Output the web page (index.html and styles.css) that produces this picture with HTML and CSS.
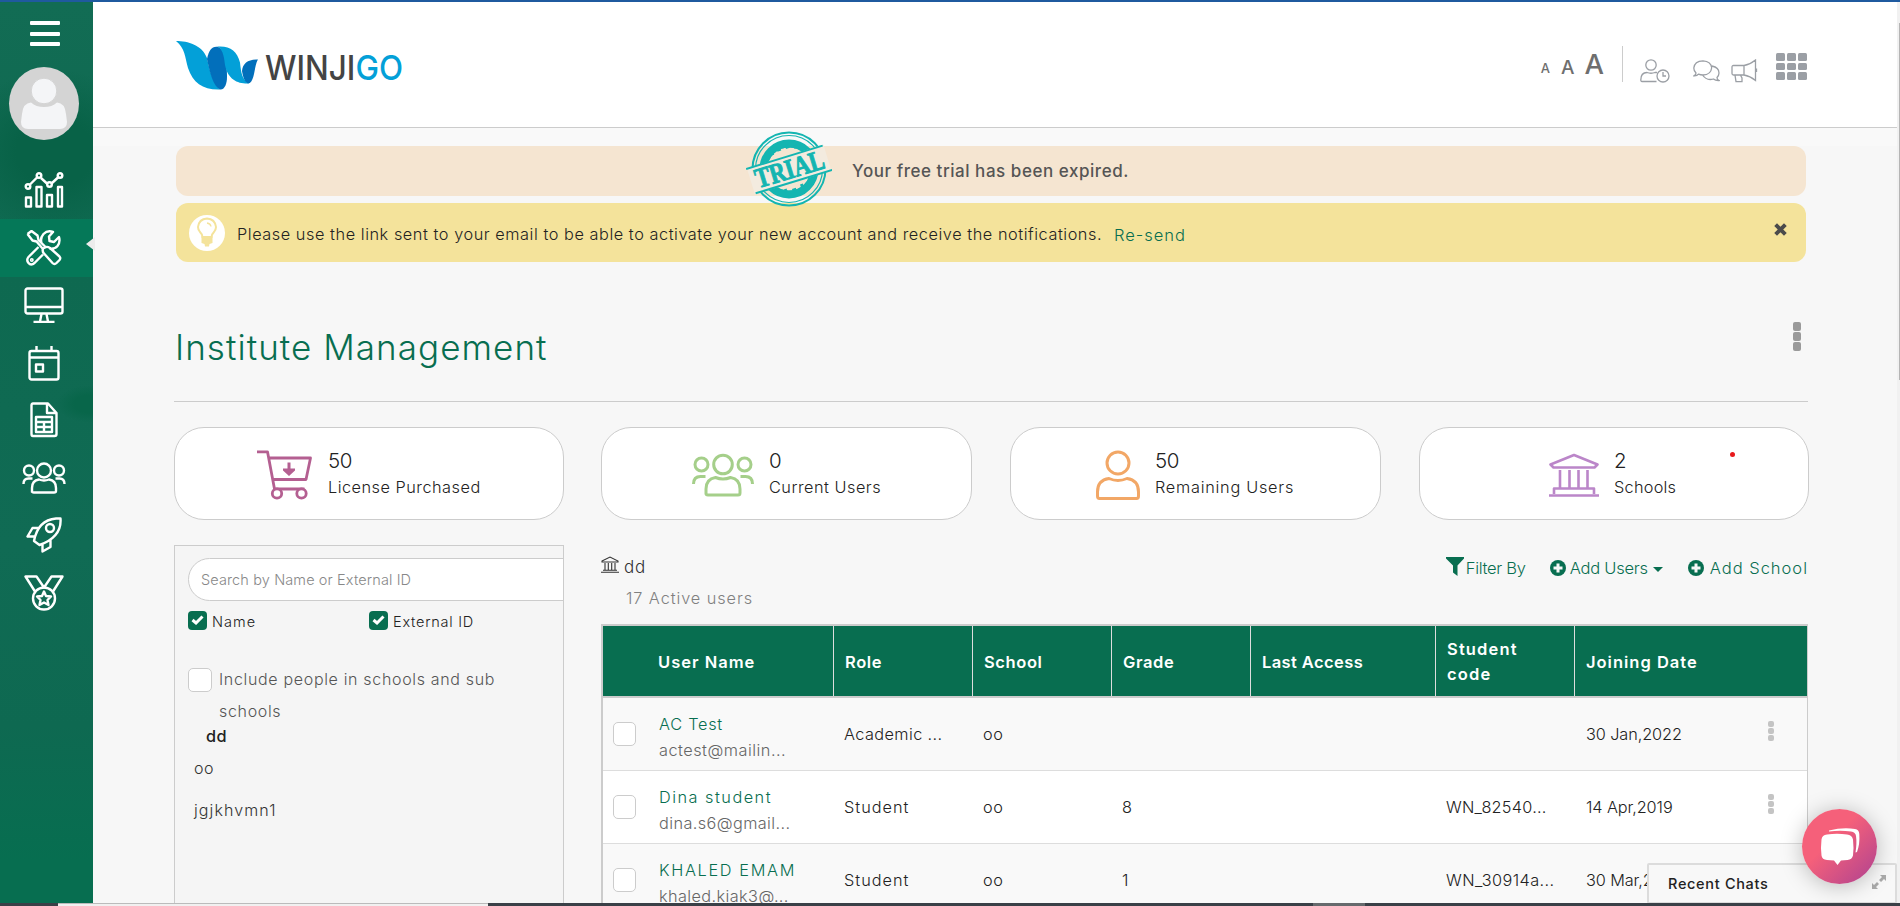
FILE: index.html
```html
<!DOCTYPE html>
<html lang="en">
<head>
<meta charset="utf-8">
<title>Winjigo - Institute Management</title>
<link rel="stylesheet" href="styles.css">
</head>
<body>
<div class="window">
  <nav class="sidebar">
    <div class="burger"><i></i><i></i><i></i></div>
    <div class="avatar">
      <svg width="70" height="73" viewBox="0 0 70 73"><circle cx="35" cy="24" r="12.8"/><path d="M22 35.500Q27 40 35 40T48 35.500Q56 36 57 47L58 55Q58 62 51 62H19Q12 62 12 55L13 47Q14 36 22 35.500Z"/></svg>
    </div>
    <ul class="nav">
      <li><svg width="40" height="36" viewBox="0 0 40 36"><path d="M2 25.500h5v9H2zM12.500 15h5v19.500h-5zM23 23h5v11.500h-5zM34 15h4v19.500h-4zM6 12.500l7.500-7.500M17 6l6.500 6M27.500 11.500l7-6.500"/><circle cx="4" cy="14.500" r="2.300"/><circle cx="15" cy="3.500" r="2.300"/><circle cx="25.500" cy="12.500" r="2.300"/><circle cx="36" cy="3.500" r="2.300"/></svg></li>
      <li class="active"><svg width="36" height="36" viewBox="0 0 36 36"><path d="M1.500 4l4-3 6 4.500 1 4.500 7 7M1.500 4l5 6.500 4 1 6.500 7.500M17 18.500q-1 3 1 5l8.500 9.500q2 2 4 0l3-3q1.500-2 0-3.500L24 18q-3-2-5-.5zM12.500 17L2.500 27q-2.500 3 0 6t6 0l8.500-8.500M15.500 13q-1.500-5 2-9 4-4 9.500-2l-4 4.500.5 4.500 4.500 1L33 7q1.500 5-1.500 9-3 3.500-8 2.500"/><circle cx="5.800" cy="30" r=".8"/></svg></li>
      <li><svg width="40" height="36" viewBox="0 0 40 36"><rect x="1.500" y="1.500" width="37" height="25" rx="2"/><path d="M2 20h36M17.500 27L16 34.500M22.500 27l1.500 7.500M9.500 35h21"/></svg></li>
      <li><svg width="32" height="36" viewBox="0 0 32 36"><rect x="1.500" y="6" width="29" height="28.500" rx="2"/><path d="M2 12.500h28M8.500 1v5M23.500 1v5M8 19.500h7v7H8z"/></svg></li>
      <li><svg width="28" height="36" viewBox="0 0 28 36"><path d="M3 1.500h15l8.500 9.500v21q0 2-2 2H3q-1.500 0-1.500-2V3.500q0-2 1.500-2zM17 2v9h9M6 15h16v15H6zM6 20h16M6 25h16M14 20v10"/></svg></li>
      <li><svg width="44" height="32" viewBox="0 0 44 32"><circle cx="22" cy="8.500" r="7"/><circle cx="7" cy="8.500" r="5"/><circle cx="37" cy="8.500" r="5"/><path d="M10 30.500V26q0-7.500 7-8.500 5 2 10 0 7 1 7 8.500v3q0 1.500-2 1.500H12q-2 0-2-1.500M1.500 22q0-5.500 5-5.500h4M42.500 22q0-5.500-5-5.500h-4"/></svg></li>
      <li><svg width="36" height="36" viewBox="0 0 36 36"><path d="M8 24Q12 3 30 1.500h4.500Q36 20 13.500 28zM13 11H6.500L1.500 19.500h7M16.500 27.500V34.500l8-4.500V22.500"/><circle cx="24" cy="11" r="4"/></svg></li>
      <li><svg width="40" height="36" viewBox="0 0 40 36"><circle cx="20" cy="23.500" r="11"/><path d="M11 16.500L1.500 1.500h11l7.500 11 7.500-11h11L29 16.500"/><path d="M20 16.500l2 4.500 5 .5-3.500 3.500 1 5-4.500-2.500-4.500 2.500 1-5L13 21.500l5-.5z"/></svg></li>
    </ul>
  </nav>

  <div class="page">
    <header class="topbar">
      <svg class="logo" width="230" height="54" viewBox="0 0 230 54">
        <path fill="#03a0d8" d="M0 1C12 1 26 5 31 18 34 33 38 44 44 49.500 27 50 17 43 12 28 9 17 9 8 0 1Z"/>
        <path fill="#026fbb" d="M31 19C33 10 36 6 42 7c7 2 9 17 9 30 0 6-2 13-7 12.500C37 46 34 33 31 19Z"/>
        <path fill="#03a0d8" d="M41 6.500c13-1 20 4 23 16C65 32 66 40 73 43.500 62 44 52 40 49 25 48 15 46 8 41 6.500Z"/>
        <path fill="#026fbb" d="M66 31C67 23 72 19.500 82 19.500 78 25 79 43 72 43.500c-4-2-5-7-6-12.500Z"/>
        <text x="89" y="40" textLength="138" lengthAdjust="spacingAndGlyphs" fill="#444">WINJI<tspan fill="#03a0d8">GO</tspan></text>
      </svg>
      <div class="tools">
        <span class="fs fs1">A</span><span class="fs fs2">A</span><span class="fs fs3">A</span>
        <span class="sep"></span>
        <svg class="i1" width="30" height="24" viewBox="0 0 30 24"><circle cx="11" cy="6" r="5.200"/><path d="M16.500 22.500H2q-1.200 0-1.200-1.500 0-7.500 6.200-7.500 4 1.500 8 0h2"/><circle cx="23" cy="17" r="6"/><path d="M23 13v4h3"/></svg>
        <svg class="i2" width="27" height="22" viewBox="0 0 27 22"><path d="M3 13Q.8 11 .8 8 1.500 1 10 .8q8 .5 8.700 7-.8 7-8.700 7.200-2.500 0-4.500-.8Q4 16 1 15.800 3 14.500 3 13zM19 6q7 1.500 7 7 0 2.500-2 4.500 0 2 2 3-3.500.2-5.500-1.500-7 2-11-4"/></svg>
        <svg class="i3" width="27" height="24" viewBox="0 0 27 24"><path d="M13 6.500H2.500Q1 6.500 1 8v6.500Q1 16 2.500 16H13zM13 6.500q6-1 11.500-5.500v20.500Q19 17 13 16M4 16.200l1 6.500h6V19l-1.500-2.800M25.500 9.500v3.500"/></svg>
        <div class="apps"><i></i><i></i><i></i><i></i><i></i><i></i><i></i><i></i><i></i></div>
      </div>
    </header>

    <main class="content">
      <div class="alert trial">
        <span class="stamp"><svg width="86" height="77" viewBox="0 0 86 77">
          <g fill="none" stroke="#14b5b1"><circle cx="43" cy="38" r="36.500" stroke-width="2"/><circle cx="43" cy="38" r="33.500" stroke-width="1.200"/><circle cx="43" cy="38" r="25.500" stroke-width="8"/><circle cx="43" cy="38" r="22" stroke-width=".8"/></g>
          <g transform="rotate(-17 43 38)"><path fill="#f3ebdf" d="M3 25h80v27H3z"/><path stroke="#14b5b1" stroke-width="2" d="M2 25.500h80M4 51.500h80"/><text x="8" y="47.500" textLength="71" lengthAdjust="spacingAndGlyphs">TRIAL</text>
          <path fill="#14b5b1" d="M30 17h3v3h-3zM37 14h4v4h-4zM46 14h4v4h-4zM54 17h3v3h-3zM32 56h3v3h-3zM40 58h4v4h-4zM49 56h3v3h-3z"/></g>
        </svg></span>
        <span>Your free trial has been expired.</span>
      </div>
      <div class="alert notice">
        <svg width="36" height="36" viewBox="0 0 36 36"><circle cx="18" cy="18" r="18" fill="#fff"/><path d="M13.500 22q0-2.500-2.500-5-2-2.500-2-5 1-8 9-8.500 8 .5 9 8.500 0 2.500-2 5-2.500 2.500-2.500 5z" fill="#fff" stroke="#f4e39b" stroke-width="2"/><path fill="#f4e39b" d="M12.500 21h11v7l-3 1-.5 2.500h-4l-.5-2.500-3-1z"/><path d="M18 8q3.500.5 4 3.500" fill="none" stroke="#f4e39b" stroke-width="1.300"/></svg>
        <span class="notice-text">Please use the link sent to your email to be able to activate your new account and receive the notifications.</span>
        <a class="resend">Re-send</a>
        <svg class="close" width="13" height="13" viewBox="0 0 12 12"><path d="M1.500 1.500l9 9M10.500 1.500l-9 9" stroke="#4b4b4b" stroke-width="3.600"/></svg>
      </div>

      <div class="title-row">
        <h1>Institute Management</h1>
        <span class="dots big"><i></i><i></i><i></i></span>
      </div>

      <div class="stats">
        <div class="card c1">
          <svg width="56" height="50" viewBox="0 0 56 50" stroke="#b45f91"><path stroke-width="2.800" d="M0 1.800h10.500l7 37.200h30M12 8h41.500L49 29.500H16"/><circle cx="20" cy="43.500" r="4.700" fill="#fff" stroke-width="2.800"/><circle cx="44.500" cy="43.500" r="4.700" fill="#fff" stroke-width="2.800"/><path stroke="none" fill="#b45f91" d="M30.500 12.500h3v6H38v2l-6 5.500-6-5.500v-2h4.500z"/></svg>
          <div><b>50</b><span class="ls5">License Purchased</span></div>
        </div>
        <div class="card c2">
          <svg width="62" height="44" viewBox="0 0 62 44" stroke="#a5cf8a" stroke-width="3"><circle cx="31" cy="11.500" r="9.300"/><circle cx="9.500" cy="11.500" r="6.500"/><circle cx="52.500" cy="11.500" r="6.500"/><path d="M14 41.500V36q0-10 9.500-11.500 7.500 3 15 0Q48 26 48 36v4q0 2-2 2H16q-2 0-2-2M1.500 31q0-7.500 7-7.500h5M60.500 31q0-7.500-7-7.500h-5"/></svg>
          <div><b>0</b><span class="ls5">Current Users</span></div>
        </div>
        <div class="card c3">
          <svg width="44" height="50" viewBox="0 0 44 50" stroke="#f2a766" stroke-width="3"><circle cx="22" cy="13" r="11"/><path d="M1.500 46V42Q1.500 30 13 28.500q9 4 18 0Q42.500 30 42.500 42v4q0 2.500-2 2.500h-37q-2 0-2-2.500z"/></svg>
          <div><b>50</b><span class="ls7">Remaining Users</span></div>
        </div>
        <div class="card c4">
          <svg width="50" height="44" viewBox="0 0 50 44" stroke="#bb86c9" stroke-width="2.600"><path d="M1.500 11.500L25 2l23.500 9.500-3 3h-41zM11 17v18M20.500 17v18M29.500 17v18M38.500 17v18M5 41v-5.500h40V41M0 42.500h50"/></svg>
          <div><b>2</b><span class="ls2">Schools</span></div>
          <em class="pin"></em>
        </div>
      </div>

      <div class="columns">
        <aside class="panel">
          <div class="search">Search by Name or External ID</div>
          <div class="checks">
            <label><span class="tick"><svg width="13" height="10" viewBox="0 0 13 10"><path d="M1.500 5l3.500 3 6.500-6.500"/></svg></span><span class="ls10">Name</span></label>
            <label><span class="tick"><svg width="13" height="10" viewBox="0 0 13 10"><path d="M1.500 5l3.500 3 6.500-6.500"/></svg></span><span class="ls8">External ID</span></label>
          </div>
          <label class="include"><span class="box"></span><span>Include people in schools and sub schools</span></label>
          <div class="tree-root">dd</div>
          <div class="tree-item">oo</div>
          <div class="tree-item second">jgjkhvmn1</div>
        </aside>

        <section class="users">
          <div class="users-head">
            <div class="group">
              <div class="group-name"><svg width="18" height="17" viewBox="0 0 18 17"><path d="M1 5l8-4 8 4v1H1zM4 7v7M7.300 7v7M10.700 7v7M14 7v7M2 14.200h14M0 16.300h18"/></svg><span>dd</span></div>
              <div class="count">17 Active users</div>
            </div>
            <div class="actions">
              <a class="filter"><svg width="19" height="19" viewBox="0 0 19 19"><path d="M0 0h18v1.500L11.500 8.500V19L7 15.500v-7L0 1.500z"/></svg><span>Filter By</span></a>
              <a class="addu"><svg width="16" height="16" viewBox="0 0 16 16"><circle cx="8" cy="8" r="8"/><path class="plus" d="M8 3.500v9M3.500 8h9"/></svg><span>Add Users</span><i class="caret"></i></a>
              <a class="adds"><svg width="16" height="16" viewBox="0 0 16 16"><circle cx="8" cy="8" r="8"/><path class="plus" d="M8 3.500v9M3.500 8h9"/></svg><span>Add School</span></a>
            </div>
          </div>
          <div class="table">
            <div class="row head">
              <span class="c-name"><span class="ls10">User Name</span></span><span class="w1">Role</span><span class="w1">School</span><span class="w1">Grade</span><span class="ls4">Last Access</span><span class="ls11">Student<br>code</span><span class="ls10">Joining Date</span>
            </div>
            <div class="row odd">
              <span class="check"><i class="box"></i></span><span class="who"><a class="ls7">AC Test</a><small class="ls5">actest@mailin...</small></span><span class="ls4">Academic ...</span><span class="ls5">oo</span><span></span><span></span><span></span><span class="date">30 Jan,2022</span><span class="dots"><i></i><i></i><i></i></span>
            </div>
            <div class="row">
              <span class="check"><i class="box"></i></span><span class="who"><a class="ls15">Dina student</a><small class="ls4">dina.s6@gmail...</small></span><span class="ls10">Student</span><span class="ls5">oo</span><span>8</span><span></span><span class="ls2">WN_82540...</span><span class="date">14 Apr,2019</span><span class="dots"><i></i><i></i><i></i></span>
            </div>
            <div class="row odd">
              <span class="check"><i class="box"></i></span><span class="who"><a class="ls16">KHALED EMAM</a><small class="ls4">khaled.kiak3@...</small></span><span class="ls10">Student</span><span class="ls5">oo</span><span>1</span><span></span><span class="ls4">WN_30914a...</span><span class="date">30 Mar,2021</span><span class="dots"><i></i><i></i><i></i></span>
            </div>
          </div>
        </section>
      </div>
    </main>
  </div>
  <div class="scrollbar"><i></i></div>

  <div class="recent"><span>Recent Chats</span><svg width="14" height="14" viewBox="0 0 14 14"><path d="M14 0v6l-2-2-3 3-2-2 3-3-2-2zM0 14V8l2 2 3-3 2 2-3 3 2 2z"/></svg></div>
  <div class="chat"><svg width="75" height="75" viewBox="0 0 75 75"><path fill="#fff" d="M25 25.500Q35 24 45 25.500q5 .5 6 5 1 9 0 16-1 4-5.500 4.500L39 51.500 35.500 56 32 51.500l-7-.5q-5-.5-5.500-4.500-1-8 0-16 .5-4.500 5.500-5z"/><path fill="#fff" d="M27 21.500Q41 18 53 20q4 .5 4.300 5 .7 10-2.300 18l-1.500.5Q55 34 54 27q-.5-4-5-4.500-11-1.500-22 0z"/></svg></div>
  <footer class="taskbar"><i class="sheet"></i><i class="tab"></i></footer>
</div>
</body>
</html>
```
FILE: styles.css
```css
* { box-sizing: border-box; }
body { margin: 0; font-family: Inter, "Liberation Sans", sans-serif; font-weight: 300; font-size: 16.3px; color: #222; background: #f7f7f7; }
i, em { font-style: normal; display: block; }
svg { display: block; flex: none; }
a { color: #086e50; }

.window { position: relative; width: 1900px; height: 906px; overflow: hidden; display: flex; border-top: 2px solid #1f5a9f; }

.sidebar { width: 93px; flex: none; padding-top: 19px; display: flex; flex-direction: column; align-items: center;
  background:
    radial-gradient(ellipse 130px 110px at 55px 150px, #086247 30%, transparent 75%),
    radial-gradient(ellipse 40px 22px at 90px 402px, #08664a 40%, transparent 85%),
    linear-gradient(#126c54 0, #0e6950 30%, #106b54 60%, #0e6951 80%, #076e50 95%); }
.burger { width: 30px; height: 25px; display: flex; flex-direction: column; justify-content: space-between; margin-right: 4px; }
.burger i { height: 4px; background: #fff; border-radius: 1px; }
.avatar { width: 70px; height: 73px; border-radius: 50%; background: #d4d4d4; margin: 21px 5px 0 0; overflow: hidden; }
.avatar svg { fill: #f4f5f7; }
.avatar circle { stroke: #d4d4d4; stroke-width: 1; }
.nav { list-style: none; margin: 21.500px 0 0; padding: 0; width: 100%; }
.nav li { height: 57.500px; display: flex; align-items: center; justify-content: center; padding-right: 5px; position: relative; }
.nav svg { fill: none; stroke: #fff; stroke-width: 2.400; stroke-linejoin: round; }
.nav .active { background: #057858; }
.nav .active::after { content: ""; position: absolute; right: -2px; top: 18px; border: 7px solid transparent; border-right: 9px solid #ececec; border-left: 0; }

.page { width: 1804px; flex: none; }
.topbar { height: 126px; background: #fff; border-bottom: 1px solid #ccc; display: flex; justify-content: space-between; align-items: flex-start; padding: 38px 90px 0 83px; }
.logo text { font: 500 34.500px Inter, sans-serif; }
.tools { display: flex; align-items: flex-start; }
.tools svg { fill: none; stroke: #9b9fa5; stroke-width: 1.300; }
.fs { color: #6e6e6e; font-weight: 500; line-height: 1; }
.fs1 { font-size: 13px; margin: 22px 11px 0 0; }
.fs2 { font-size: 19px; margin: 18px 10px 0 0; }
.fs3 { font-size: 27.500px; margin: 11px 18px 0 0; }
.sep { width: 1px; height: 36px; background: #ccc; margin: 6px 17px 0 0; }
.i1 { margin: 19px 23px 0 0; }
.i2 { margin: 20px 11px 0 0; }
.i3 { margin: 19px 18px 0 0; }
.apps { display: grid; grid-template-columns: repeat(3, 9px); grid-auto-rows: 7.700px; gap: 2px; margin-top: 13px; }
.apps i { background: #9b9fa5; border-radius: 1.500px; }

.content { padding: 18px 89px 0 81px; background: linear-gradient(#f9f9f9 18px, #f7f7f7 18px); height: 776px; overflow: hidden; }
.alert { display: flex; align-items: center; margin: 0 2px; border-radius: 12px; }
.trial { position: relative; z-index: 1; height: 50px; background: #f5e5d1; color: #555; font-weight: 500; font-size: 17px; letter-spacing: .54px; padding-left: 570px; }
.stamp { width: 86px; height: 77px; margin: -3px 20px 0 0; }
.stamp text { font: 700 28px "Liberation Serif", serif; fill: #14b5b1; stroke: #14b5b1; letter-spacing: 0; }
.notice { height: 59px; margin-top: 7px; background: #f4e39b; padding: 0 19px 0 13px; }
.notice-text { margin: 2px 0 0 12px; letter-spacing: .555px; white-space: nowrap; }
.resend { font-size: 16.500px; letter-spacing: .95px; margin: 4px 0 0 12px; }
.close { margin: -7px 0 0 auto; }

.title-row { height: 140px; border-bottom: 1px solid #ccc; display: flex; justify-content: space-between; padding: 60px 7px 0 0; }
h1 { margin: 1px 0 0 1px; font-weight: 300; font-size: 35px; line-height: 48px; letter-spacing: 1.050px; color: #086e50; }
.dots { display: flex; flex-direction: column; gap: 1px; }
.dots i { width: 6px; height: 6px; background: #c4c4c4; border-radius: 2px; }
.dots.big i { width: 8px; height: 9px; background: #9a9a9a; }

.stats { display: grid; grid-template-columns: 390px 371px 371px 389px; column-gap: 38px; margin-top: 25px; }
.card { position: relative; height: 93px; border: 1px solid #ccc; border-radius: 30px; background: #fff; display: flex; padding-top: 22px; }
.card svg { fill: none; stroke-linejoin: round; }
.card > div { display: flex; flex-direction: column; margin: -1px 0 0 15px; }
.card b { font-weight: 300; font-size: 20.500px; line-height: 24px; letter-spacing: -.4px; }
.card span { line-height: 24px; margin-top: 2px; }
.c1 { padding-left: 82px; }
.c2 { padding-left: 90px; margin: 0 1px 0 -1px; }
.c3 { padding-left: 85px; margin-left: -1px; margin-right: 1px; }
.c4 { padding-left: 129px; margin-left: -1px; margin-right: 0; }
.c2 svg, .c4 svg { margin-top: 3px; }
.pin { position: absolute; left: 310px; top: 24px; width: 5px; height: 5px; border-radius: 50%; background: #e8191c; }

.columns { display: flex; gap: 37px; margin-top: 25px; }
.panel { width: 390px; height: 380px; flex: none; border: 1px solid #ccc; background: #f5f5f5; padding: 12px 0 0 13px; overflow: hidden; }
.search { width: 420px; height: 43px; border: 1px solid #ccc; border-radius: 22px; background: #fff; color: #888; font-size: 14.500px; letter-spacing: .12px; line-height: 42px; padding-left: 12px; }
.checks { display: flex; margin-top: 10px; font-size: 14.500px; }
.checks label { display: flex; width: 181px; align-items: center; height: 19px; }
.checks label > span:last-child { margin: 2px 0 0 5px; }
.tick { width: 19px; height: 19px; border-radius: 4px; background: #086e50; display: flex; align-items: center; justify-content: center; }
.tick svg { fill: none; stroke: #fff; stroke-width: 3; margin-top: -2px; }
.box { width: 24px; height: 24px; border: 1px solid #ccc; border-radius: 5px; background: #fff; flex: none; }
.include { display: flex; margin-top: 33px; font-size: 16px; line-height: 32px; letter-spacing: .67px; color: #555; }
.include .box { margin-top: 5px; }
.include span:last-child { width: 300px; margin-left: 7px; }
.tree-root { font-weight: 500; font-size: 16.300px; line-height: 20px; margin: -1px 0 0 18px; letter-spacing: .5px; }
.tree-item { margin: 12px 0 0 6px; line-height: 20px; font-size: 16px; letter-spacing: .5px; color: #333; }
.tree-item.second { margin-top: 22px; letter-spacing: 1.100px; }

.users { width: 1207px; flex: none; }
.users-head { display: flex; justify-content: space-between; height: 79px; }
.group-name { display: flex; align-items: flex-start; padding-top: 11px; gap: 4px; color: #333; font-size: 17px; letter-spacing: .8px; }
.group-name svg { fill: none; stroke: #333; stroke-width: 1.100; margin-right: 1px; }
.group-name span { line-height: 22px; }
.count { color: #808080; letter-spacing: .92px; margin: 10px 0 0 25px; line-height: 20px; }
.actions { display: flex; padding-top: 12px; height: 36px; }
.actions a { display: flex; align-items: flex-start; font-size: 16.500px; line-height: 22px; white-space: nowrap; }
.actions svg { fill: #086e50; }
.actions .plus { stroke: #f7f7f7; stroke-width: 3; }
.filter { letter-spacing: -.28px; }
.filter span { margin-left: 1px; }
.addu { letter-spacing: -.25px; margin-left: 24px; }
.addu svg, .adds svg { margin-top: 3px; }
.addu span { margin-left: 4px; }
.adds span { margin-left: 6px; }
.adds { letter-spacing: 1px; margin-left: 25px; }
.caret { border: 5px solid transparent; border-top-color: #086e50; border-bottom: 0; margin: 10px 0 0 5px; }

.table { border: 1px solid #ccc; border-width: 2px 1px 0 2px; }
.row { display: grid; grid-template-columns: 46px 185px 139px 139px 139px 185px 139px 186px 45px; height: 73px; border-bottom: 1px solid #ddd; background: #fff; align-items: center; }
.row > span { padding-left: 10px; white-space: nowrap; }
.row.odd { background: #f9f9f9; }
.row .who { display: flex; flex-direction: column; line-height: 26px; padding-top: 5px; }
.who small { font-size: 16.300px; color: #666; }
.row > .date { margin-top: -1px; padding-left: 11px; letter-spacing: -.1px; }
.row > .dots { padding: 0 0 6px 7px; }
.check .box { width: 23px; height: 24px; }
.row.head { height: 72px; border-bottom: 2px solid #ccc; background: #086e50; color: #fff; font-weight: 600; font-size: 16.500px; line-height: 25px; grid-template-columns: 230px 139px 139px 139px 185px 139px 1fr; }
.row.head > span { height: 70px; display: flex; align-items: center; border-left: 1px solid #ddd; padding: 2px 0 0 11px; }
.row.head > .c-name { border: 0; padding-left: 55px; }
.row.head > .w1 { letter-spacing: .6px; }

.scrollbar { width: 3px; background: #f1f1f1; padding: 21px 0 0 2px; }
.scrollbar i { height: 357px; background: #b5b5b5; }

.recent { position: absolute; left: 1647px; top: 861px; width: 250px; height: 41px; border: 2px solid #dcdcdc; border-radius: 2px; background: #f8f8f8; display: flex; justify-content: space-between; align-items: center; padding: 0 9px 0 19px; font-size: 14.500px; font-weight: 500; letter-spacing: .68px; }
.recent svg { fill: #aaa; margin-top: -3px; }
.chat { position: absolute; left: 1802px; top: 807px; width: 75px; height: 75px; border-radius: 50%; background: linear-gradient(135deg, #f5607a 40%, #b3448f 95%); box-shadow: 0 2px 22px rgba(0, 0, 0, .25); }
.taskbar { position: absolute; left: 0; right: 0; bottom: 0; height: 3px; background: #3a4047; display: flex; }
.sheet { width: 430px; margin-left: 58px; background: #f1f0f0; border-top: 1px solid #bbb; }
.tab { width: 52px; margin-left: 825px; background: #666a6d; }

.ls2 { letter-spacing: .25px; }
.ls4 { letter-spacing: .4px; }
.ls5 { letter-spacing: .5px; }
.ls7 { letter-spacing: .74px; }
.ls8 { letter-spacing: .75px; }
.ls10 { letter-spacing: 1px; }
.ls11 { letter-spacing: 1.150px; }
.ls15 { letter-spacing: 1.490px; }
.ls16 { letter-spacing: 1.660px; }
```
